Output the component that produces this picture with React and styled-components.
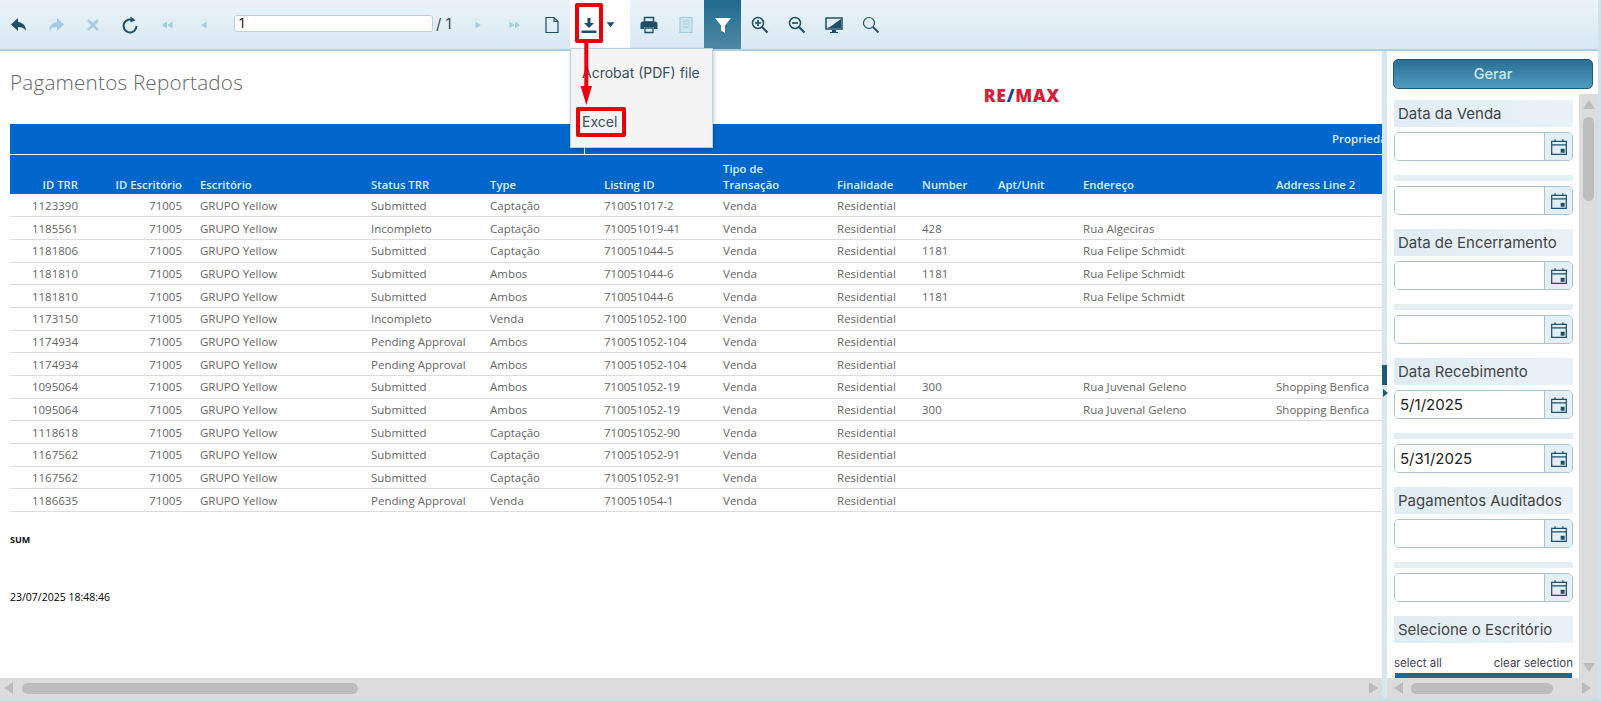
import React from 'react';
import styled, {createGlobalStyle} from 'styled-components';

const GlobalStyle = createGlobalStyle`
  html, body {
    margin: 0;
    padding: 0;
    overflow: hidden;
    background: #fff;
  }
  * {
    box-sizing: border-box;
  }
`;

const uiFont = `Inter, "Noto Sans", sans-serif`;
const reportFont = `"Open Sans", "Noto Sans", sans-serif`;

const Root = styled.div`
  position: relative;
  width: 1601px;
  height: 701px;
  display: flex;
  flex-direction: column;
  overflow: hidden;
  border-right: 3px solid #cfe3ee;
  border-bottom: 3px solid #c9dfe6;
`;

const Toolbar = styled.div`
  flex-shrink: 0;
  height: 51px;
  display: flex;
  align-items: stretch;
  background: linear-gradient(to bottom, #eaf3f9, #d9e9f3);
  border-bottom: 2px solid #a9d0e3;
`;

const ToolButton = styled.div`
  width: ${p => p.$width || 37}px;
  height: 49px;
  display: flex;
  align-items: center;
  justify-content: center;
  color: ${p => (p.$disabled ? '#a5cde0' : '#1f4e68')};
  flex-shrink: 0;
`;

const FilterButton = styled(ToolButton)`
  color: #fff;
  background: linear-gradient(to bottom, #1f6a8e, #4f88a4);
`;

const ExportGroup = styled.div`
  position: relative;
  width: 60px;
  height: 49px;
  flex-shrink: 0;
  display: flex;
  align-items: center;
  padding-left: 9px;
  gap: 6px;
  background: #fff;
  color: #1f4e68;
`;

const PageInput = styled.div`
  width: 199px;
  height: 17px;
  margin: 15px 0 0 12px;
  padding-left: 4px;
  background: #fff;
  border: 1px solid #b5d3e2;
  border-radius: 3px;
  font: 13px/15px ${uiFont};
  color: #222;
`;

const PageTotal = styled.div`
  width: 26px;
  padding: 14px 0 0 3px;
  font: 15px/20px ${uiFont};
  color: #3c4a52;
`;

const ExportMenu = styled.div`
  position: absolute;
  top: 48px;
  left: 0;
  width: 143px;
  height: 100px;
  z-index: 3;
  background: #f4f4f4;
  border: 1px solid #b9d4e1;
  box-shadow: 1px 2px 4px rgba(0, 0, 0, 0.22);
`;

const MenuItem = styled.div`
  height: 49px;
  display: flex;
  align-items: center;
  padding: 0 0 2px 11px;
  font: 14px ${uiFont};
  color: #37505e;
  white-space: nowrap;
`;

const RedBox = styled.div`
  position: absolute;
  z-index: 4;
  left: ${p => p.$left}px;
  top: ${p => p.$top}px;
  width: ${p => p.$width}px;
  height: ${p => p.$height}px;
  border: 4px solid #e8000f;
  border-radius: 2px;
`;

const RedArrow = styled.svg`
  position: absolute;
  z-index: 4;
  left: 580px;
  top: 43px;
`;

const Main = styled.div`
  flex: 1;
  min-height: 0;
  display: flex;
`;

const ReportPane = styled.div`
  width: 1382px;
  flex-shrink: 0;
  display: flex;
  flex-direction: column;
`;

const ReportBody = styled.div`
  flex: 1;
  min-height: 0;
  overflow: hidden;
  padding: 0 0 0 10px;
  font-family: ${reportFont};
`;

const TitleRow = styled.div`
  height: 73px;
  display: flex;
  align-items: flex-start;
  justify-content: space-between;
  padding-right: 322px;
`;

const Title = styled.h1`
  margin: 17px 0 0;
  font: 300 20.7px/28px ${reportFont};
  letter-spacing: 0.2px;
  color: #666;
`;

const Logo = styled.div`
  margin-top: 31px;
  font: 800 17.5px/26px ${reportFont};
  letter-spacing: 0.8px;
  color: #d2203a;
`;

const LogoSlash = styled.span`
  color: #1c3f94;
`;

const Table = styled.table`
  table-layout: fixed;
  border-collapse: collapse;
  width: 2138px;
  font-size: 11.5px;
`;

const BandCell = styled.th`
  height: 30px;
  padding: 0;
  background: #0066cc;
  color: #d9f1ff;
  font-weight: 600;
  font-size: 11.5px;
  text-align: center;
  border-bottom: 1px solid #fff;
  border-left: ${p => (p.$divided ? '1px solid #fff' : '0')};
`;

const HeadCell = styled.th`
  height: 40px;
  vertical-align: bottom;
  padding: 0 4px 1px ${p => p.$pad}px;
  background: #0066cc;
  color: #d9f1ff;
  font-weight: 600;
  font-size: 11.3px;
  line-height: 16px;
  text-align: ${p => p.$align};
`;

const Cell = styled.td`
  height: 22.7px;
  padding: 0 4px 0 ${p => p.$pad}px;
  color: #666;
  text-align: ${p => p.$align};
  border-bottom: 1px solid #dcdcdc;
  white-space: nowrap;
  overflow: hidden;
`;

const SumLabel = styled.div`
  margin-top: 21px;
  font: 700 9px/14px ${reportFont};
  color: #111;
`;

const Stamp = styled.div`
  margin-top: 43px;
  font: 400 10.5px/14px ${reportFont};
  color: #000;
`;

const ScrollTrack = styled.div`
  flex-shrink: 0;
  height: 20px;
  display: flex;
  align-items: center;
  background: #dcdcdc;
  padding: 0 ${p => p.$inset || 4}px;
`;

const ScrollThumb = styled.div`
  width: ${p => p.$size}px;
  height: 11px;
  margin: 0 ${p => p.$gap}px;
  border-radius: 6px;
  background: #bdbdbd;
`;

const ScrollFill = styled.div`
  flex: 1;
`;

const ArrowHorizontal = styled.div`
  width: 0;
  height: 0;
  border-top: 6px solid transparent;
  border-bottom: 6px solid transparent;
  ${p => (p.$right ? 'border-left: 9px solid #bdbdbd;' : 'border-right: 9px solid #bdbdbd;')}
`;

const Splitter = styled.div`
  position: relative;
  width: 5px;
  flex-shrink: 0;
  background: #d5e8f2;
`;

const SplitterHandle = styled.div`
  position: absolute;
  left: 0;
  top: 314px;
  width: 5px;
  height: 20px;
  background: #1e5a78;
`;

const SplitterArrow = styled.div`
  position: absolute;
  left: 1px;
  top: 338px;
  width: 0;
  height: 0;
  border-top: 4px solid transparent;
  border-bottom: 4px solid transparent;
  border-left: 5px solid #1e5a78;
`;

const FilterPanel = styled.div`
  flex: 1;
  min-width: 0;
  display: flex;
  flex-direction: column;
  background: #fff;
`;

const GenerateRow = styled.div`
  flex-shrink: 0;
  height: 43px;
  padding: 8px 5px 0 6px;
`;

const GenerateButton = styled.div`
  height: 30px;
  padding-bottom: 1px;
  display: flex;
  align-items: center;
  justify-content: center;
  border: 1px solid #1d5a78;
  border-radius: 5px;
  background: linear-gradient(to bottom, #2a6f94, #4f9bbf);
  font: 500 14.5px ${uiFont};
  color: #cfe9f5;
`;

const PanelScroll = styled.div`
  flex: 1;
  min-height: 0;
  display: flex;
`;

const FieldList = styled.div`
  flex: 1;
  min-width: 0;
  overflow: hidden;
  padding: 6px 6px 0 7px;
  font-family: ${uiFont};
`;

const VScroll = styled.div`
  width: 19px;
  flex-shrink: 0;
  display: flex;
  flex-direction: column;
  align-items: center;
  padding: 6px 0;
  background: #dcdcdc;
`;

const VThumb = styled.div`
  width: 11px;
  height: 84px;
  margin-top: 8px;
  border-radius: 6px;
  background: #bdbdbd;
`;

const ArrowVertical = styled.div`
  width: 0;
  height: 0;
  border-left: 6px solid transparent;
  border-right: 6px solid transparent;
  ${p => (p.$down ? 'border-top: 9px solid #bdbdbd;' : 'border-bottom: 9px solid #bdbdbd;')}
`;

const FieldLabel = styled.div`
  height: 27px;
  display: flex;
  align-items: center;
  padding-left: 4px;
  margin-bottom: 5px;
  background: linear-gradient(to right, #e0ecf4, #e9f2f8);
  font-size: 15px;
  color: #444;
  white-space: nowrap;
`;

const DateField = styled.div`
  height: 29px;
  display: flex;
  border: 1px solid #a9c4cf;
  border-radius: 5px;
  overflow: hidden;
  margin-bottom: 14px;
`;

const DateValue = styled.div`
  flex: 1;
  display: flex;
  align-items: center;
  padding-left: 5px;
  font-size: 15px;
  color: #222;
  background: #fff;
`;

const DateAddon = styled.div`
  width: 28px;
  display: flex;
  align-items: center;
  justify-content: center;
  background: #e3eef5;
  border-left: 1px solid #a9c4cf;
  color: #1f4e68;
`;

const FieldStrip = styled.div`
  height: 6px;
  margin-bottom: 5px;
  background: #e3eef5;
`;

const SelectActions = styled.div`
  display: flex;
  justify-content: space-between;
  margin-top: 12px;
  font-size: 11.5px;
  line-height: 16px;
  color: #445;
`;

const OfficeOption = styled.div`
  height: 24px;
  margin: 2px 1px 0;
  text-align: center;
  background: #22668c;
  color: #fff;
  font-size: 12px;
  line-height: 20px;
`;

const Svg = ({size = 20, children, fill = 'currentColor'}) => (
    <svg width={size} height={size} viewBox="0 0 20 20" fill={fill}>
        {children}
    </svg>
);

const icons = {
    back: <path d="M9 3 2 9.5 9 16v-4c3.5 0 6 .8 8 4 0-5-3-8.500-8-9z"/>,
    forward: <path d="M11 3l7 6.500-7 6.500v-4c-3.500 0-6 .8-8 4 0-5 3-8.500 8-9z"/>,
    close: <path d="M5 5l10 10M15 5 5 15" fill="none" stroke="currentColor" strokeWidth="2.600"/>,
    refresh: (
        <>
            <path d="M13.500 5.500a6.500 6.500 0 1 0 3 5.500" fill="none" stroke="currentColor" strokeWidth="2"/>
            <path d="M10.500 1.500l5 3.700-5 2.300z"/>
        </>
    ),
    first: <path d="M10 5.500v9L3.500 10zM17 5.500v9L10.500 10z"/>,
    prev: <path d="M13 5.500v9L6.500 10z"/>,
    next: <path d="M7 5.500v9l6.500-4.500z"/>,
    last: <path d="M3 5.500v9L9.500 10zM10 5.500v9l6.500-4.500z"/>,
    page: <path d="M4 2.500h8l4 4v11H4zM12 2.500v4h4" fill="none" stroke="currentColor" strokeWidth="1.200"/>,
    download: (
        <>
            <path d="M8.500 3h3v5h3.500L10 13 5 8h3.500z"/>
            <path d="M2.500 15.500h15v2.500h-15z"/>
        </>
    ),
    caret: <path d="M3 6h14l-7 9z"/>,
    print: (
        <>
            <path d="M5.500 2.500h9V7h-9z" fill="none" stroke="currentColor" strokeWidth="1.500"/>
            <path d="M4 6.500h12a2.500 2.500 0 0 1 2.500 2.500v5H15v-2H5v2H1.500V9A2.500 2.500 0 0 1 4 6.500z"/>
            <path d="M6 13h8v4.500H6z" fill="none" stroke="currentColor" strokeWidth="1.300"/>
        </>
    ),
    save: (
        <>
            <path d="M4 2.500h12v15H4z" fill="#cfe3ee" stroke="currentColor" strokeWidth="1.200"/>
            <path d="M7 6h6M7 9h6M7 12h6" stroke="currentColor" strokeWidth="1.200"/>
        </>
    ),
    filter: <path d="M2 3h16l-6 7.500V18l-4-2.500v-5z"/>,
    zoomIn: (
        <>
            <circle cx="8" cy="8" r="5.500" fill="none" stroke="currentColor" strokeWidth="1.500"/>
            <path d="M5 8h6M8 5v6" stroke="currentColor" strokeWidth="1.700"/>
            <path d="M12 12l5.500 5.500" stroke="currentColor" strokeWidth="2.200"/>
        </>
    ),
    zoomOut: (
        <>
            <circle cx="8" cy="8" r="5.500" fill="none" stroke="currentColor" strokeWidth="1.500"/>
            <path d="M5 8h6" stroke="currentColor" strokeWidth="1.700"/>
            <path d="M12 12l5.500 5.500" stroke="currentColor" strokeWidth="2.200"/>
        </>
    ),
    monitor: (
        <>
            <path d="M2 3h16v11H2z" fill="none" stroke="currentColor" strokeWidth="1.500"/>
            <path d="M3 13c4-1 8-5 14-9v9z"/>
            <path d="M8 15h4v2h2v1H6v-1h2z"/>
        </>
    ),
    search: (
        <>
            <circle cx="8" cy="8" r="5.500" fill="none" stroke="currentColor" strokeWidth="1.200"/>
            <path d="M12 12l5.500 5.500" stroke="currentColor" strokeWidth="1.800"/>
        </>
    ),
};

const CalendarIcon = () => (
    <svg width="18" height="18" viewBox="0 0 16 16" fill="none" stroke="currentColor" strokeWidth="1.100">
        <path d="M1.500 3h13v11.500h-13zM1.500 6.200h13"/>
        <path d="M4.500 1v2.500M11.500 1v2.500"/>
        <path d="M9.500 9.500h3.500v3.500H9.500z" fill="currentColor" stroke="none"/>
    </svg>
);

const Tool = ({icon, disabled, width, size}) => (
    <ToolButton $disabled={disabled} $width={width}>
        <Svg size={size}>{icons[icon]}</Svg>
    </ToolButton>
);

const columns = [
    {key: 'id', label: 'ID TRR', width: 72, align: 'right', pad: 4},
    {key: 'office', label: 'ID Escritório', width: 104, align: 'right', pad: 4},
    {key: 'name', label: 'Escritório', width: 171, align: 'left', pad: 14},
    {key: 'status', label: 'Status TRR', width: 119, align: 'left', pad: 14},
    {key: 'type', label: 'Type', width: 108, align: 'left', pad: 14},
    {key: 'listing', label: 'Listing ID', width: 125, align: 'left', pad: 20},
    {key: 'deal', label: <>Tipo de<br/>Transação</>, width: 114, align: 'left', pad: 14},
    {key: 'purpose', label: 'Finalidade', width: 85, align: 'left', pad: 14},
    {key: 'number', label: 'Number', width: 76, align: 'left', pad: 14},
    {key: 'unit', label: 'Apt/Unit', width: 85, align: 'left', pad: 14},
    {key: 'street', label: 'Endereço', width: 193, align: 'left', pad: 14},
    {key: 'line2', label: 'Address Line 2', width: 140, align: 'left', pad: 14},
    {key: 'rest', label: '', width: 746, align: 'left', pad: 14},
];

const row = (id, status, type, listing, number = '', street = '', line2 = '') => ({
    id, office: '71005', name: 'GRUPO Yellow', status, type, listing,
    deal: 'Venda', purpose: 'Residential', number, unit: '', street, line2, rest: '',
});

const rows = [
    row('1123390', 'Submitted', 'Captação', '710051017-2'),
    row('1185561', 'Incompleto', 'Captação', '710051019-41', '428', 'Rua Algeciras'),
    row('1181806', 'Submitted', 'Captação', '710051044-5', '1181', 'Rua Felipe Schmidt'),
    row('1181810', 'Submitted', 'Ambos', '710051044-6', '1181', 'Rua Felipe Schmidt'),
    row('1181810', 'Submitted', 'Ambos', '710051044-6', '1181', 'Rua Felipe Schmidt'),
    row('1173150', 'Incompleto', 'Venda', '710051052-100'),
    row('1174934', 'Pending Approval', 'Ambos', '710051052-104'),
    row('1174934', 'Pending Approval', 'Ambos', '710051052-104'),
    row('1095064', 'Submitted', 'Ambos', '710051052-19', '300', 'Rua Juvenal Geleno', 'Shopping Benfica'),
    row('1095064', 'Submitted', 'Ambos', '710051052-19', '300', 'Rua Juvenal Geleno', 'Shopping Benfica'),
    row('1118618', 'Submitted', 'Captação', '710051052-90'),
    row('1167562', 'Submitted', 'Captação', '710051052-91'),
    row('1167562', 'Submitted', 'Captação', '710051052-91'),
    row('1186635', 'Pending Approval', 'Venda', '710051054-1'),
];

const filters = [
    {label: 'Data da Venda'},
    {label: 'Data de Encerramento'},
    {label: 'Data Recebimento', from: '5/1/2025', to: '5/31/2025'},
    {label: 'Pagamentos Auditados'},
];

const DateInput = ({value}) => (
    <DateField>
        <DateValue>{value}</DateValue>
        <DateAddon><CalendarIcon/></DateAddon>
    </DateField>
);

const App = () => (
    <Root>
        <GlobalStyle/>
        <Toolbar>
            <Tool icon="back"/>
            <Tool icon="forward" disabled/>
            <Tool icon="close" disabled/>
            <Tool icon="refresh"/>
            <Tool icon="first" disabled size={16}/>
            <Tool icon="prev" disabled size={16}/>
            <PageInput>1</PageInput>
            <PageTotal>/ 1</PageTotal>
            <Tool icon="next" disabled size={16}/>
            <Tool icon="last" disabled size={16}/>
            <Tool icon="page"/>
            <ExportGroup>
                <Svg>{icons.download}</Svg>
                <Svg size={11}>{icons.caret}</Svg>
                <ExportMenu>
                    <MenuItem>Acrobat (PDF) file</MenuItem>
                    <MenuItem>Excel</MenuItem>
                </ExportMenu>
            </ExportGroup>
            <Tool icon="print"/>
            <Tool icon="save" disabled/>
            <FilterButton><Svg>{icons.filter}</Svg></FilterButton>
            <Tool icon="zoomIn"/>
            <Tool icon="zoomOut"/>
            <Tool icon="monitor"/>
            <Tool icon="search"/>
        </Toolbar>
        <RedBox $left={575} $top={3} $width={28} $height={40}/>
        <RedBox $left={576} $top={107} $width={50} $height={30}/>
        <RedArrow width="14" height="63" viewBox="0 0 14 63">
            <path d="M4.300 0h4v43h3.700L6.300 62 .7 43h3.600z" fill="#e8000f"/>
        </RedArrow>
        <Main>
            <ReportPane>
                <ReportBody>
                    <TitleRow>
                        <Title>Pagamentos Reportados</Title>
                        <Logo>RE<LogoSlash>/</LogoSlash>MAX</Logo>
                    </TitleRow>
                    <Table>
                        <colgroup>
                            {columns.map(c => <col key={c.key} style={{width: c.width}}/>)}
                        </colgroup>
                        <thead>
                            <tr>
                                <BandCell colSpan={5}/>
                                <BandCell colSpan={8} $divided>Propriedade</BandCell>
                            </tr>
                            <tr>
                                {columns.map(c => (
                                    <HeadCell key={c.key} $align={c.align} $pad={c.pad}>{c.label}</HeadCell>
                                ))}
                            </tr>
                        </thead>
                        <tbody>
                            {rows.map((r, i) => (
                                <tr key={i}>
                                    {columns.map(c => (
                                        <Cell key={c.key} $align={c.align} $pad={c.pad}>{r[c.key]}</Cell>
                                    ))}
                                </tr>
                            ))}
                        </tbody>
                    </Table>
                    <SumLabel>SUM</SumLabel>
                    <Stamp>23/07/2025 18:48:46</Stamp>
                </ReportBody>
                <ScrollTrack>
                    <ArrowHorizontal/>
                    <ScrollThumb $size={336} $gap={9}/>
                    <ScrollFill/>
                    <ArrowHorizontal $right/>
                </ScrollTrack>
            </ReportPane>
            <Splitter>
                <SplitterHandle/>
                <SplitterArrow/>
            </Splitter>
            <FilterPanel>
                <GenerateRow>
                    <GenerateButton>Gerar</GenerateButton>
                </GenerateRow>
                <PanelScroll>
                    <FieldList>
                        {filters.map(f => (
                            <div key={f.label}>
                                <FieldLabel>{f.label}</FieldLabel>
                                <DateInput value={f.from}/>
                                <FieldStrip/>
                                <DateInput value={f.to}/>
                            </div>
                        ))}
                        <FieldLabel>Selecione o Escritório</FieldLabel>
                        <SelectActions>
                            <span>select all</span>
                            <span>clear selection</span>
                        </SelectActions>
                        <OfficeOption>All</OfficeOption>
                    </FieldList>
                    <VScroll>
                        <ArrowVertical/>
                        <VThumb/>
                        <ScrollFill/>
                        <ArrowVertical $down/>
                    </VScroll>
                </PanelScroll>
                <ScrollTrack $inset={7}>
                    <ArrowHorizontal/>
                    <ScrollThumb $size={142} $gap={8}/>
                    <ScrollFill/>
                    <ArrowHorizontal $right/>
                </ScrollTrack>
            </FilterPanel>
        </Main>
    </Root>
);

export default App;
